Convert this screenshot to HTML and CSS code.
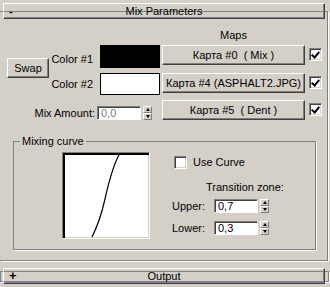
FILE: index.html
```html
<!DOCTYPE html>
<html lang="ru">
<head>
  <meta charset="UTF-8">
  <title>Mix Parameters</title>
  <link rel="stylesheet" href="styles.css">
</head>
<body>
  <div class="rollout">
    <div class="rollout-head">
      <span class="toggle">-</span>
      <span class="rollout-title">Mix Parameters</span>
      <span></span>
    </div>

    <div class="mix-grid">
      <div class="maps-label">Maps</div>

      <button class="btn swap">Swap</button>

      <div class="color-label label-1">Color #1</div>
      <div class="swatch swatch-1"></div>
      <button class="btn map-btn map-1">Карта #0  ( Mix )</button>
      <span class="check checked check-1"></span>

      <div class="color-label label-2">Color #2</div>
      <div class="swatch swatch-2"></div>
      <button class="btn map-btn map-2">Карта #4 (ASPHALT2.JPG)</button>
      <span class="check checked check-2"></span>

      <div class="amount-row">
        <span class="amount-label">Mix Amount:</span>
        <span class="field field-disabled">0,0</span>
        <span class="spin"><span class="spin-up"></span><span class="spin-down"></span></span>
      </div>
      <button class="btn map-btn map-3">Карта #5  ( Dent )</button>
      <span class="check checked check-3"></span>
    </div>

    <fieldset class="group">
      <legend>Mixing curve</legend>
      <div class="curve-row">
        <div class="curve-box">
          <svg width="86" height="85" viewBox="0 0 86 85">
            <path d="M29 84 C34 74 38 64 42 46 S50 12 57 0" fill="none" stroke="#000" stroke-width="1.2"/>
          </svg>
        </div>
        <div class="curve-side">
          <div class="use-curve">
            <span class="check"></span>
            <span>Use Curve</span>
          </div>
          <div class="zone-title">Transition zone:</div>
          <div class="zone-row">
            <span class="zone-label">Upper:</span>
            <span class="field">0,7</span>
            <span class="spin"><span class="spin-up"></span><span class="spin-down"></span></span>
          </div>
          <div class="zone-row zone-lower">
            <span class="zone-label">Lower:</span>
            <span class="field">0,3</span>
            <span class="spin"><span class="spin-up"></span><span class="spin-down"></span></span>
          </div>
        </div>
      </div>
    </fieldset>
  </div>

  <div class="rollout rollout-closed">
    <div class="rollout-head">
      <span class="toggle toggle-plus">+</span>
      <span class="rollout-title">Output</span>
      <span></span>
    </div>
  </div>
</body>
</html>
```

FILE: styles.css
```css
body {
  margin: 0;
  width: 330px;
  height: 287px;
  overflow: hidden;
  background-color: #d4d0c8;
  font-family: "Liberation Sans", Arial, sans-serif;
  font-size: 11px;
  color: #000;
}

/* rollout frames */
.rollout {
  width: 327px;
  margin-top: 11px;
  border-top: 1px solid #808080;
  border-right: 1px solid #808080;
  border-bottom: 1px solid #808080;
  box-shadow: 1px 1px 0 #fff;
}

.rollout-head {
  display: grid;
  grid-template-columns: 1fr auto 1fr;
  align-items: center;
  box-sizing: border-box;
  width: 322px;
  height: 16px;
  margin: -9px 0 0 3px;
  line-height: 14px;
  border-top: 1px solid #fff;
  border-left: 1px solid #fff;
  border-right: 1px solid #404040;
  border-bottom: 1px solid #404040;
  box-shadow: inset -1px -1px 0 #808080;
}

.toggle {
  padding-left: 5px;
  font-weight: bold;
}

.toggle-plus {
  padding-left: 5px;
  font-size: 13px;
}

.rollout-closed {
  margin-top: 10px;
  border-left: 1px solid #808080;
}

.rollout-closed .rollout-head {
  margin: -4px 0 -3px 2px;
}

/* buttons and fields */
.btn {
  box-sizing: border-box;
  margin: 0;
  padding: 0;
  font: inherit;
  color: #000;
  background-color: #d4d0c8;
  border-top: 1px solid #fff;
  border-left: 1px solid #fff;
  border-right: 1px solid #404040;
  border-bottom: 1px solid #404040;
  box-shadow: inset -1px -1px 0 #808080;
  white-space: pre;
}

.check {
  position: relative;
  display: inline-block;
  box-sizing: border-box;
  width: 13px;
  height: 13px;
  background-color: #fff;
  border-top: 1px solid #808080;
  border-left: 1px solid #808080;
  border-right: 1px solid #fff;
  border-bottom: 1px solid #fff;
  box-shadow: inset 1px 1px 0 #404040, inset -1px -1px 0 #d4d0c8;
}

.checked::after {
  content: "";
  position: absolute;
  left: 2px;
  top: 1px;
  width: 3px;
  height: 6px;
  border-right: 2px solid #000;
  border-bottom: 2px solid #000;
  transform: translate(1px, 0) rotate(40deg);
}

.field {
  box-sizing: border-box;
  display: inline-block;
  width: 44px;
  height: 14px;
  padding-left: 3px;
  line-height: 12px;
  background-color: #fff;
  border-top: 1px solid #808080;
  border-left: 1px solid #808080;
  border-right: 1px solid #fff;
  border-bottom: 1px solid #fff;
  box-shadow: inset 1px 1px 0 #404040;
}

.field-disabled {
  color: #808080;
}

.spin {
  display: inline-flex;
  flex-direction: column;
  width: 9px;
  height: 14px;
  margin-left: 2px;
}

.spin-up,
.spin-down {
  display: flex;
  align-items: center;
  justify-content: center;
  box-sizing: border-box;
  height: 7px;
  background-color: #d4d0c8;
  border-top: 1px solid #fff;
  border-left: 1px solid #fff;
  border-right: 1px solid #808080;
  border-bottom: 1px solid #808080;
}

.spin-up::after,
.spin-down::after {
  content: "";
  border-left: 2px solid transparent;
  border-right: 2px solid transparent;
}

.spin-up::after {
  border-bottom: 3px solid #000;
}

.spin-down::after {
  border-top: 3px solid #000;
}

/* top section */
.mix-grid {
  display: grid;
  grid-template-columns: 42px 51px 62px 147px 13px;
  grid-template-rows: 13px 23px 22px 20px;
  row-gap: 5px;
  padding: 8px 0 0 7px;
}

.maps-label {
  grid-column: 4;
  grid-row: 1;
  width: 143px;
  padding-top: 2px;
  text-align: center;
  line-height: 13px;
}

.swap {
  grid-column: 1;
  grid-row: 2 / 4;
  align-self: start;
  height: 20px;
  margin-top: 13px;
}

.color-label {
  grid-column: 2;
  padding-right: 7px;
  text-align: right;
  align-self: center;
}

.label-1 {
  grid-row: 2;
  padding-top: 5px;
}

.label-2 {
  grid-row: 3;
}

.swatch {
  grid-column: 3;
  box-sizing: border-box;
  width: 60px;
  border: 1px solid #000;
}

.swatch-1 {
  grid-row: 2;
  background-color: #000;
}

.swatch-2 {
  grid-row: 3;
  background-color: #fff;
}

.map-btn {
  grid-column: 4;
  align-self: start;
  width: 143px;
  height: 20px;
}

.map-1 { grid-row: 2; }
.map-2 { grid-row: 3; }
.map-3 { grid-row: 4; }

.mix-grid .check {
  grid-column: 5;
  margin-top: 3px;
}

.check-1 { grid-row: 2; }
.check-2 { grid-row: 3; }
.check-3 { grid-row: 4; margin-top: 4px; }

.amount-row {
  grid-column: 1 / 4;
  grid-row: 4;
  display: flex;
  align-items: flex-end;
  justify-content: flex-end;
  padding-right: 10px;
}

.amount-label {
  margin-right: 2px;
  line-height: 14px;
}

/* mixing curve group */
.group {
  box-sizing: border-box;
  width: 303px;
  margin: 15px 0 10px 13px;
  padding: 0 0 10px 0;
  border: 1px solid #808080;
  box-shadow: 1px 1px 0 #fff;
}

.group legend {
  margin-left: 6px;
  padding: 0 2px;
  line-height: 13px;
}

.curve-row {
  display: flex;
}

.curve-box {
  box-sizing: border-box;
  width: 88px;
  height: 87px;
  margin: 4px 0 0 48px;
  background-color: #fff;
  border-top: 1px solid #808080;
  border-left: 1px solid #808080;
  border-right: 1px solid #fff;
  border-bottom: 1px solid #fff;
  box-shadow: inset 2px 2px 0 #000, inset -1px -1px 0 #d4d0c8;
}

.curve-box svg {
  display: block;
}

.curve-side {
  margin-left: 22px;
}

.use-curve {
  display: flex;
  align-items: center;
  gap: 6px;
  margin: 8px 0 0 2px;
  line-height: 13px;
}

.zone-title {
  margin-top: 12px;
  padding-left: 34px;
  line-height: 13px;
}

.zone-row {
  display: flex;
  align-items: center;
  margin-top: 5px;
}

.zone-lower {
  margin-top: 8px;
}

.zone-label {
  width: 42px;
  line-height: 14px;
}
```
